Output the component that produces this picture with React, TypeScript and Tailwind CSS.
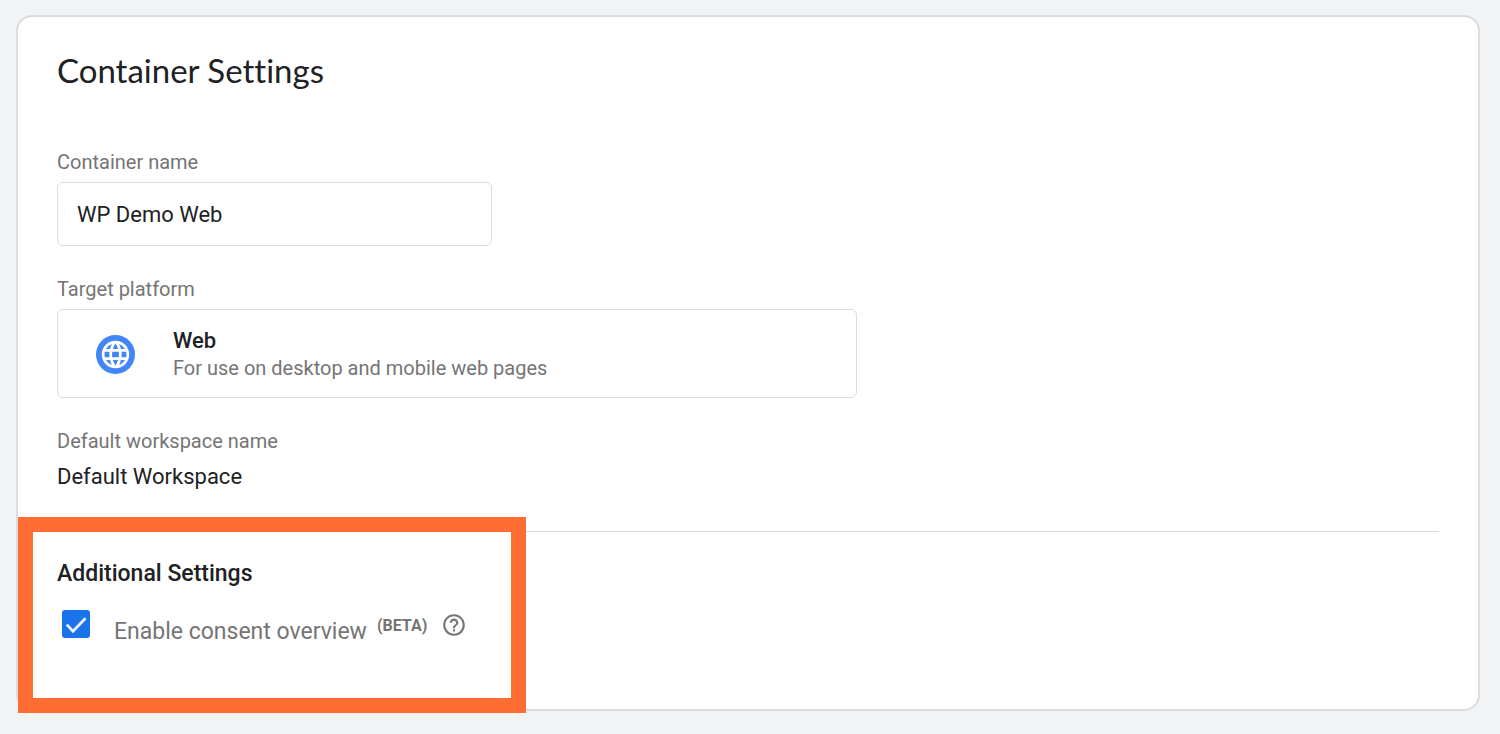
import { useState } from "react";
import { MdHelpOutline, MdLanguage } from "react-icons/md";

const labelClass = "block text-xl leading-6 text-[#757575]";

export default function App() {
  const [name, setName] = useState("WP Demo Web");
  const [consent, setConsent] = useState(true);

  return (
    <div className="min-h-screen bg-[#f1f3f4] pt-[15px] pr-5 pb-[23px] pl-4 font-['Roboto','Liberation_Sans',sans-serif] text-[#202124]">
      <main className="rounded-2xl border-2 border-[#dadce0] bg-white px-[39px] pt-[33px] pb-[61px]">
        <h1 className="font-['Lato','Roboto',sans-serif] text-[33px] leading-10 [font-variant-ligatures:none]">
          Container Settings
        </h1>

        <div className="mt-[60px]">
          <label htmlFor="container-name" className={labelClass}>
            Container name
          </label>
          <input
            id="container-name"
            type="text"
            value={name}
            onChange={(e) => setName(e.target.value)}
            className="mt-2 block h-16 w-full max-w-[435px] rounded-md border border-[#dadce0] bg-white px-[19px] text-[22px] outline-none"
          />
        </div>

        <section className="mt-[31px]">
          <h2 className={labelClass}>Target platform</h2>
          <div className="mt-2 flex w-full max-w-[800px] items-center rounded-md border border-[#dadce0] pt-[17px] pb-[15px] pl-[38px]">
            <span className="mr-[38px] flex size-[39px] shrink-0 items-center justify-center rounded-full bg-[#4285f4] text-white">
              <MdLanguage size={33} aria-hidden="true" />
            </span>
            <div>
              <p className="text-[22px] leading-7 font-medium">Web</p>
              <p className="text-xl leading-[27px] text-[#757575]">For use on desktop and mobile web pages</p>
            </div>
          </div>
        </section>

        <section className="mt-[31px]">
          <h2 className={labelClass}>Default workspace name</h2>
          <p className="mt-2 text-[22px] leading-8">Default Workspace</p>
        </section>

        <section className="relative mt-[38px] border-t border-[#dadce0] pt-[26px]">
          <h2 className="text-[23px] leading-8 font-medium">Additional Settings</h2>
          <div className="mt-5 flex items-start pl-[5px]">
            <span className="relative size-7 shrink-0">
              <input
                id="consent"
                type="checkbox"
                checked={consent}
                onChange={(e) => setConsent(e.target.checked)}
                className="peer block size-7 appearance-none rounded-[3px] border-2 border-[#757575] checked:border-[#1a73e8] checked:bg-[#1a73e8]"
              />
              <svg
                viewBox="0 0 28 28"
                aria-hidden="true"
                className="pointer-events-none absolute inset-0 hidden size-7 peer-checked:block"
              >
                <path d="M4.8 14.6 11 21.2 23.5 8.2" fill="none" stroke="#f1f3f4" strokeWidth="2.7" />
              </svg>
            </span>
            <label htmlFor="consent" className="ml-6 flex items-start text-[#757575]">
              <span className="pt-1.5 text-[23px] leading-8">Enable consent overview</span>
              <span className="ml-2.5 pt-1 text-base leading-6 font-bold">(BETA)</span>
            </label>
            <button type="button" aria-label="Help" className="ml-3.5 pt-0.5 text-[#757575]">
              <MdHelpOutline size={26} aria-hidden="true" />
            </button>
          </div>
          <div className="pointer-events-none absolute -top-[15px] -left-[39px] h-[196px] w-[508px] border-[15px] border-[#ff6d33]" />
        </section>
      </main>
    </div>
  );
}
